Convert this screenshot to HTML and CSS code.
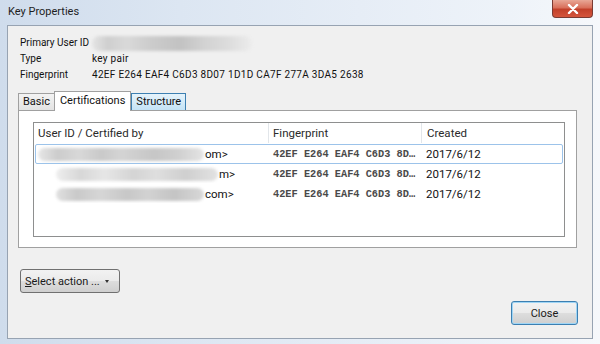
FILE: index.html
```html
<!DOCTYPE html>
<html lang="en">

<head>
    <title>Key Properties</title>
    <link rel="stylesheet" href="styles.css">
</head>

<body>
<div class="window">
    <div class="titlebar">
        <span class="title">Key Properties</span>
        <div class="close-x">
            <svg width="12" height="10" viewBox="0 0 12 10">
                <path d="M2 1 L10 9 M10 1 L2 9" stroke="#fff" stroke-width="2.4" stroke-linecap="round"/>
            </svg>
        </div>
    </div>

    <div class="client">
        <div class="info">
            <div class="info-label">Primary User ID</div>
            <div class="info-value"><span class="smudge smudge-primary"></span></div>
            <div class="info-label">Type</div>
            <div class="info-value">key pair</div>
            <div class="info-label">Fingerprint</div>
            <div class="info-value">42EF E264 EAF4 C6D3 8D07 1D1D CA7F 277A 3DA5 2638</div>
        </div>

        <div class="tabs">
            <div class="tab">Basic</div>
            <div class="tab tab-active">Certifications</div>
            <div class="tab tab-hover">Structure</div>
        </div>

        <div class="panel">
            <div class="listview">
                <div class="lv-head">
                    <div class="col col-uid">User ID / Certified by</div>
                    <div class="col col-fpr">Fingerprint</div>
                    <div class="col col-date">Created</div>
                </div>
                <div class="lv-row lv-focus">
                    <div class="cell col-uid"><span class="smudge smudge-row1"></span><span class="uid-tail">om&gt;</span></div>
                    <div class="cell col-fpr mono">42EF E264 EAF4 C6D3 8D…</div>
                    <div class="cell col-date">2017/6/12</div>
                </div>
                <div class="lv-row">
                    <div class="cell col-uid indent"><span class="smudge smudge-row2"></span><span class="uid-tail">m&gt;</span></div>
                    <div class="cell col-fpr mono">42EF E264 EAF4 C6D3 8D…</div>
                    <div class="cell col-date">2017/6/12</div>
                </div>
                <div class="lv-row">
                    <div class="cell col-uid indent"><span class="smudge smudge-row3"></span><span class="uid-tail">com&gt;</span></div>
                    <div class="cell col-fpr mono">42EF E264 EAF4 C6D3 8D…</div>
                    <div class="cell col-date">2017/6/12</div>
                </div>
            </div>
        </div>

        <div class="actions">
            <button class="btn btn-select"><u>S</u>elect action ... <span class="caret"></span></button>
        </div>

        <div class="footer">
            <button class="btn btn-default">Close</button>
        </div>
    </div>
</div>
</body>

</html>
```

FILE: styles.css
```css
html,
body {
    margin: 0;
    padding: 0;
}

body {
    width: 600px;
    height: 344px;
    overflow: hidden;
    font-family: Roboto, "Noto Sans", sans-serif;
    font-size: 10px;
    color: #111;
}

.window {
    height: 344px;
    display: flex;
    flex-direction: column;
    background: linear-gradient(90deg, #cfdcec 0%, #dce6f2 30%, #e6edf6 60%, #eef3f9 85%, #f6f8fb 100%);
}

.titlebar {
    height: 25px;
    display: flex;
    align-items: flex-start;
    padding: 0 7px 0 8px;
}

.title {
    margin-top: 5px;
    font-size: 11px;
    color: #1e1e1e;
}

.close-x {
    margin-left: auto;
    width: 41px;
    height: 18px;
    border: 1px solid #7a3a32;
    border-top: none;
    border-radius: 0 0 4px 4px;
    background: linear-gradient(#e8a796 0%, #d9705b 45%, #c2402a 55%, #d5553c 100%);
    display: flex;
    align-items: center;
    justify-content: center;
    box-sizing: border-box;
}

.client {
    flex: 1;
    margin: 0 7px 5px 7px;
    background-color: #f0f0f0;
    border: 1px solid #97a3b2;
    display: flex;
    flex-direction: column;
}

.info {
    display: grid;
    grid-template-columns: 72px auto;
    padding: 9px 0 0 12px;
    line-height: 16px;
}

.info-label {
    white-space: nowrap;
}

.info-value {
    display: flex;
    align-items: center;
    white-space: nowrap;
    letter-spacing: 0.3px;
}

.smudge {
    display: inline-block;
    height: 13px;
    border-radius: 7px;
    filter: blur(1.6px);
}

.smudge-primary {
    width: 160px;
    height: 15px;
    background: linear-gradient(90deg, #e4e4e4 0%, #cfcfcf 10%, #d9d9d9 22%, #cdcdcd 35%, #c2c2c2 55%, #d2d2d2 70%, #dcdcdc 85%, #ececec 100%);
}

.tabs {
    display: flex;
    align-items: flex-end;
    height: 19px;
    margin: 8px 0 0 10px;
    font-size: 11px;
}

.tab {
    height: 17px;
    line-height: 16px;
    padding: 0 4px;
    border: 1px solid #a0a0a0;
    border-bottom: none;
    border-right: none;
    box-sizing: border-box;
    background: linear-gradient(#f3f3f3, #e3e3e3);
}

.tab-active {
    position: relative;
    z-index: 1;
    height: 20px;
    margin-bottom: -1px;
    padding: 0 5px;
    background: #fff;
    border-right: 1px solid #a0a0a0;
    line-height: 17px;
}

.tab-hover {
    border: 1px solid #3c7fb1;
    border-bottom: none;
    background: linear-gradient(#e5f3fb, #c4e3f6);
}

.panel {
    margin: 0 15px 0 10px;
    height: 138px;
    box-sizing: border-box;
    border: 1px solid #a0a0a0;
    background: #fff;
    padding: 11px 11px 10px 14px;
}

.listview {
    height: 115px;
    box-sizing: border-box;
    border: 1px solid #8e8f8f;
    background: #fff;
    font-size: 11.5px;
}

.lv-head {
    display: flex;
    height: 20px;
    line-height: 20px;
    color: #2a2a2a;
}

.lv-head .col {
    padding-left: 4px;
    box-sizing: border-box;
    border-right: 1px solid #e2e6ea;
}

.col-uid {
    width: 235px;
}

.col-fpr {
    width: 153px;
}

.col-date {
    flex: 1;
}

.lv-head .col-date {
    border-right: none;
    padding-left: 5px;
}

.lv-row {
    display: flex;
    height: 20px;
    line-height: 18px;
    margin: 1px 1px -1px;
    box-sizing: border-box;
    border: 1px solid transparent;
}

.lv-focus {
    border: 1px solid #9cc3ea;
    border-radius: 2px;
}

.cell {
    box-sizing: border-box;
    padding-left: 3px;
    white-space: nowrap;
    overflow: hidden;
    display: flex;
    align-items: center;
}

.lv-row .col-uid {
    width: 234px;
    padding-left: 2px;
}

.lv-row .indent {
    padding-left: 20px;
}

.lv-row .col-date {
    padding-left: 3px;
}

.uid-tail {
    margin-left: 1px;
}

.smudge-row1 {
    width: 166px;
    background: linear-gradient(90deg, #e6e6e6 0%, #cccccc 12%, #d8d8d8 25%, #c9c9c9 38%, #d4d4d4 50%, #c6c6c6 70%, #d0d0d0 85%, #e4e4e4 100%);
}

.smudge-row2 {
    width: 162px;
    background: linear-gradient(90deg, #eeeeee 0%, #d7d7d7 15%, #e6e6e6 30%, #d4d4d4 48%, #dedede 62%, #cfcfcf 80%, #e2e2e2 100%);
}

.smudge-row3 {
    width: 148px;
    background: linear-gradient(90deg, #e0e0e0 0%, #c9c9c9 14%, #d6d6d6 30%, #c7c7c7 48%, #d2d2d2 62%, #c4c4c4 80%, #d8d8d8 100%);
}

.mono {
    font-family: "Liberation Mono", monospace;
    font-size: 10.3px;
    font-weight: bold;
    color: #4a4a4a;
}

.actions {
    padding: 21px 0 0 12px;
}

.btn {
    font-family: Roboto, "Noto Sans", sans-serif;
    font-size: 11px;
    color: #1a1a1a;
    height: 24px;
    border: 1px solid #707070;
    border-radius: 3px;
    background: linear-gradient(#f2f2f2 0%, #ebebeb 48%, #dddddd 52%, #cfcfcf 100%);
    padding: 0;
}

.btn-select {
    width: 100px;
    text-align: left;
    padding-left: 4px;
}

.btn-select u {
    text-decoration: underline;
}

.caret {
    display: inline-block;
    width: 0;
    height: 0;
    margin-left: 3px;
    vertical-align: middle;
    border-left: 2px solid transparent;
    border-right: 2px solid transparent;
    border-top: 3px solid #333;
}

.footer {
    margin-top: auto;
    display: flex;
    justify-content: flex-end;
    padding: 0 14px 13px 0;
}

.btn-default {
    width: 67px;
    border-color: #3c7fb1;
    box-shadow: inset 0 0 0 1px #9fd5f5;
}
```
